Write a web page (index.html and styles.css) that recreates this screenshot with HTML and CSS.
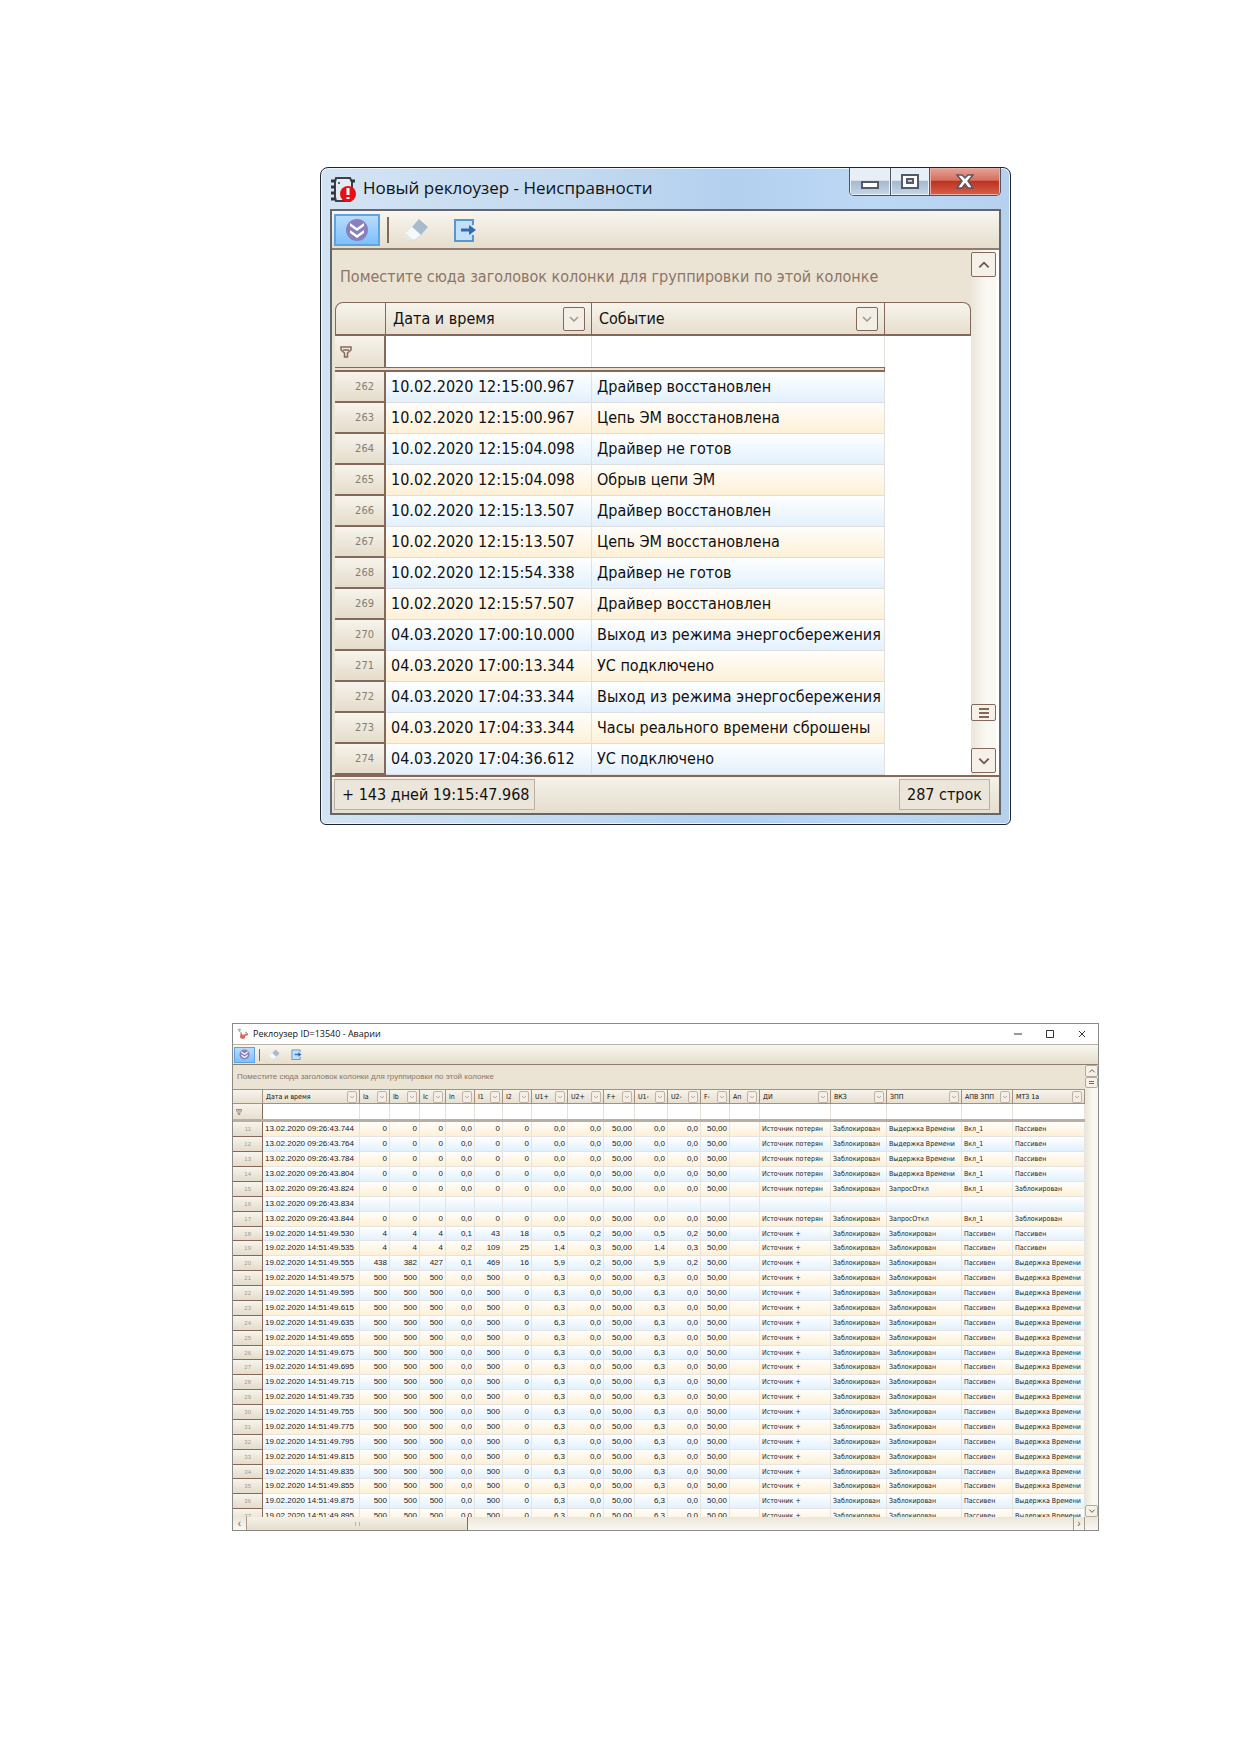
FILE: index.html
```html
<!DOCTYPE html>
<html lang="ru">
<head>
<meta charset="utf-8">
<title>Реклоузер</title>
<link rel="stylesheet" href="styles.css">
</head>
<body>
<svg class="defs" aria-hidden="true">
  <symbol id="i-expand" viewBox="0 0 24 24">
    <circle cx="12" cy="12" r="11" fill="#8a80be"/>
    <path d="M5 5l7 5 7-5v3l-7 5-7-5zM5 12l7 5 7-5v3l-7 5-7-5z" fill="#fff"/>
  </symbol>
  <symbol id="i-eraser" viewBox="0 0 24 24">
    <path d="M14 1l9 8-7 8-9-8z" fill="#a9bace"/>
    <path d="M7 9l9 8-6 5h-4l-6-6z" fill="#f5f9fc"/>
    <path d="M1 16l6 6h3l6-5" fill="none" stroke="#d2dae2"/>
  </symbol>
  <symbol id="i-export" viewBox="0 0 24 24">
    <path d="M20 7V2H2v21h18v-6" fill="#c2e1f8" stroke="#5a96d0" stroke-width="2"/>
    <path d="M8 12h9" stroke="#3468b0" stroke-width="3"/>
    <path d="M16 7l7 5-7 5z" fill="#3468b0"/>
  </symbol>
  <symbol id="i-down" viewBox="0 0 12 12">
    <path d="M2 4l4 4 4-4" fill="none" stroke="currentColor" stroke-width="1.5"/>
  </symbol>
  <symbol id="i-up" viewBox="0 0 12 12">
    <path d="M2 8l4-4 4 4" fill="none" stroke="currentColor" stroke-width="1.5"/>
  </symbol>
  <symbol id="i-funnel" viewBox="0 0 12 12">
    <path d="M1 1h10v3L7.500 7v4h-3V7L1 4zM3 4h6" fill="none" stroke="#84695a" stroke-width="1.500"/>
  </symbol>
</svg>
<main class="page">
  <section class="faults" aria-label="Неисправности">
    <header class="faults-title">
      <svg class="app-icon" viewBox="0 0 25 25">
        <path d="M5 1h14l2 4v15l-2 4H5l-1-4V5z" fill="#e3ebf3" stroke="#3c3f49" stroke-width="2"/>
        <path d="M0 4h4M0 10h4M0 16h4M0 22h4M20 4h4" stroke="#33343c" stroke-width="3"/>
        <circle cx="8" cy="6" r="1" fill="#333"/>
        <circle cx="17" cy="17" r="8" fill="#e81018"/>
        <path d="M17 11v7M17 20v2" stroke="#fff" stroke-width="3"/>
      </svg>
      <h1>Новый реклоузер - Неисправности</h1>
      <div class="caption-buttons">
        <button class="cap min" aria-label="Свернуть"><svg width="20" height="10" viewBox="0 0 20 10"><path d="M2 2h16v6H2z" fill="#fff" stroke="#535a6b" stroke-width="2"/></svg></button>
        <button class="cap max" aria-label="Развернуть"><svg width="18" height="15" viewBox="0 0 18 15"><path d="M1 1h16v13H1zM6 5h6v4H6z" fill="#fff" fill-rule="evenodd" stroke="#535a6b" stroke-width="2"/></svg></button>
        <button class="cap close" aria-label="Закрыть"><svg width="18" height="15" viewBox="0 0 18 15"><path d="M1 1h5l3 3 3-3h5l-5 6 5 7h-5l-3-4-3 4H1l5-7z" fill="#fff" stroke="#5b5562" stroke-width="1.500"/></svg></button>
      </div>
    </header>
    <div class="faults-frame">
      <div class="toolbar">
        <button class="tool active" aria-label="Развернуть группы"><svg><use href="#i-expand"/></svg></button>
        <span class="tool-sep"></span>
        <button class="tool" aria-label="Очистить"><svg><use href="#i-eraser"/></svg></button>
        <button class="tool" aria-label="Экспорт"><svg><use href="#i-export"/></svg></button>
      </div>
      <div class="grid-area">
        <div class="grid-pane">
          <p class="group-hint">Поместите сюда заголовок колонки для группировки по этой колонке</p>
          <table class="grid">
            <colgroup><col class="c-num"><col class="c-date"><col class="c-event"><col></colgroup>
            <thead>
              <tr class="head"><th></th>
                <th><div class="th">Дата и время<button class="drop" aria-label="Фильтр: дата"><svg><use href="#i-down"/></svg></button></div></th>
                <th><div class="th">Событие<button class="drop" aria-label="Фильтр: событие"><svg><use href="#i-down"/></svg></button></div></th>
                <th></th></tr>
              <tr class="filter"><th><svg class="funnel"><use href="#i-funnel"/></svg></th><td><input aria-label="Дата и время"></td><td><input aria-label="Событие"></td><td class="rest"></td></tr>
              <tr class="split"><td colspan="3"></td><td class="rest"></td></tr>
            </thead>
            <tbody>
              <tr><th>262</th><td>10.02.2020 12:15:00.967</td><td>Драйвер восстановлен</td><td class="rest"></td></tr>
              <tr><th>263</th><td>10.02.2020 12:15:00.967</td><td>Цепь ЭМ восстановлена</td><td class="rest"></td></tr>
              <tr><th>264</th><td>10.02.2020 12:15:04.098</td><td>Драйвер не готов</td><td class="rest"></td></tr>
              <tr><th>265</th><td>10.02.2020 12:15:04.098</td><td>Обрыв цепи ЭМ</td><td class="rest"></td></tr>
              <tr><th>266</th><td>10.02.2020 12:15:13.507</td><td>Драйвер восстановлен</td><td class="rest"></td></tr>
              <tr><th>267</th><td>10.02.2020 12:15:13.507</td><td>Цепь ЭМ восстановлена</td><td class="rest"></td></tr>
              <tr><th>268</th><td>10.02.2020 12:15:54.338</td><td>Драйвер не готов</td><td class="rest"></td></tr>
              <tr><th>269</th><td>10.02.2020 12:15:57.507</td><td>Драйвер восстановлен</td><td class="rest"></td></tr>
              <tr><th>270</th><td>04.03.2020 17:00:10.000</td><td>Выход из режима энергосбережения</td><td class="rest"></td></tr>
              <tr><th>271</th><td>04.03.2020 17:00:13.344</td><td>УС подключено</td><td class="rest"></td></tr>
              <tr><th>272</th><td>04.03.2020 17:04:33.344</td><td>Выход из режима энергосбережения</td><td class="rest"></td></tr>
              <tr><th>273</th><td>04.03.2020 17:04:33.344</td><td>Часы реального времени сброшены</td><td class="rest"></td></tr>
              <tr><th>274</th><td>04.03.2020 17:04:36.612</td><td>УС подключено</td><td class="rest"></td></tr>
            </tbody>
          </table>
        </div>
        <div class="vscroll">
          <button aria-label="Вверх"><svg><use href="#i-up"/></svg></button>
          <span class="track"></span>
          <button class="thumb" aria-label="Прокрутка"><i></i><i></i><i></i></button>
          <span class="track-end"></span>
          <button aria-label="Вниз"><svg><use href="#i-down"/></svg></button>
        </div>
      </div>
      <footer class="status"><span class="elapsed">+ 143 дней 19:15:47.968</span><span>287 строк</span></footer>
    </div>
  </section>

  <section class="alarms" aria-label="Аварии">
    <header class="alarms-title">
      <svg class="app-icon" viewBox="0 0 12 12">
        <path d="M1 1l2 3M2 1l2 1M4 4v6M10 4l-2 1" stroke="#8f8f98" fill="none"/>
        <path d="M4 5l2 2 5-2v2l-3 1v2l-2 1-3-1z" fill="#df6457"/>
      </svg>
      <h2>Реклоузер ID=13540 - Аварии</h2>
      <div class="flat-buttons">
        <button aria-label="Свернуть"><svg viewBox="0 0 8 8"><path d="M0 4h8"/></svg></button>
        <button aria-label="Развернуть"><svg viewBox="0 0 8 8"><path d="M.5.5h7v7h-7z"/></svg></button>
        <button aria-label="Закрыть"><svg viewBox="0 0 8 8"><path d="M1 1l6 6M7 1l-6 6"/></svg></button>
      </div>
    </header>
    <div class="toolbar small">
      <button class="tool active" aria-label="Развернуть группы"><svg><use href="#i-expand"/></svg></button>
      <span class="tool-sep"></span>
      <button class="tool" aria-label="Очистить"><svg><use href="#i-eraser"/></svg></button>
      <button class="tool" aria-label="Экспорт"><svg><use href="#i-export"/></svg></button>
    </div>
    <div class="grid-area small">
      <div class="grid-pane">
        <p class="group-hint">Поместите сюда заголовок колонки для группировки по этой колонке</p>
        <table class="grid" id="alarms"></table>
      </div>
      <div class="vscroll">
        <button aria-label="Вверх"><svg><use href="#i-up"/></svg></button>
        <button class="thumb" aria-label="Прокрутка"><i></i><i></i></button>
        <span class="track"></span>
        <button aria-label="Вниз"><svg><use href="#i-down"/></svg></button>
      </div>
    </div>
    <div class="hscroll">
      <button aria-label="Влево">‹</button>
      <button class="hthumb" aria-label="Прокрутка"><i></i><i></i></button>
      <span class="track"></span>
      <button class="right" aria-label="Вправо">›</button>
      <span class="corner"></span>
    </div>
  </section>
</main>
<script src="alarms.js"></script>
</body>
</html>
```
FILE: styles.css
```css
* { box-sizing: border-box; }
body { margin: 0; background: #fff; color: #111; font: 16px/20px "DejaVu Sans Condensed", "DejaVu Sans", sans-serif; }
button, input { font: inherit; color: inherit; margin: 0; padding: 0; border: 0; background: none; }
h1, h2, p { margin: 0; font-weight: 400; }
.defs { display: none; }
.page { display: flex; flex-direction: column; align-items: center; gap: 198px; padding: 167px 140px 225px 232px; }

.faults { width: 100%; max-width: 691px; border: 1px solid #20262e; border-radius: 8px 8px 6px 6px; padding: 0 9px 9px;
  background: linear-gradient(90deg, #d3e4f3 0, #c4daf0 35%, #b3d0ef 60%, #bcd8f5 80%, #b5d1ee 100%);
  box-shadow: inset 0 0 0 1px #eef6fd; }
.faults-title { display: flex; align-items: flex-start; height: 41px; }
.faults-title .app-icon { width: 25px; height: 25px; margin: 9px 7px 0 1px; }
.faults-title h1 { flex: 1; padding-top: 8px; font: 17px/24px "Open Sans", "Noto Sans", sans-serif; white-space: nowrap; }
.caption-buttons { display: flex; height: 28px; border: 1px solid #4b5563; border-top: 0; border-radius: 0 0 5px 5px; overflow: hidden; }
.cap { display: grid; place-items: center; background: linear-gradient(#e8eef5 0 45%, #a6b9cf 50%, #c6d7e8); box-shadow: inset 0 0 0 1px #eaf1f8; }
.min { width: 41px; border-right: 1px solid #4b5563; padding-top: 6px; }
.max { width: 39px; border-right: 1px solid #4b5563; }
.close { width: 70px; background: linear-gradient(#e6a497 0, #d5705f 45%, #bd3320 50%, #d6614a); box-shadow: inset 0 0 0 1px #e9b0a5; }
.faults-frame { border: 2px solid #62676f; background: #fff; }

.toolbar { display: flex; align-items: center; height: 39px; padding: 0 2px; border-bottom: 2px solid #8f7d70; background: linear-gradient(#f8f6f0, #e6decd); }
.tool { display: grid; place-items: center; width: 48px; height: 32px; }
.tool svg { width: 24px; height: 24px; }
.tool.active { width: 46px; border: 2px solid #5fa4e2; background: linear-gradient(#b9dcfb, #7cc0fb); }
.tool-sep { width: 2px; height: 26px; margin: 0 4px 0 7px; background: #84695a; }

.grid-area { display: flex; padding: 0 3px; }
.faults .grid-area { background: linear-gradient(90deg, #ebe4d5 0 3px, #fff 3px); }
.grid-pane { flex: 1; min-width: 0; background: #ebe4d5; }
.group-hint { height: 52px; padding: 17px 0 0 5px; color: #8c7567; white-space: nowrap; }
.grid { width: 100%; table-layout: fixed; border-collapse: separate; border-spacing: 0; }
.grid th, .grid td { padding: 0; font-weight: 400; text-align: left; white-space: nowrap; overflow: hidden; }
.c-num { width: 51px; }
.c-date { width: 206px; }
.c-event { width: 293px; }
.head th { height: 34px; border: 1px solid #84695a; border-width: 1px 1px 2px 0; background: linear-gradient(#f7f4ec, #e7dfcf); }
.faults .head th:first-child { border-left-width: 1px; border-radius: 8px 0 0; }
.faults .head th:last-child { border-radius: 0 8px 0 0; }
.th { display: flex; align-items: center; justify-content: space-between; padding: 0 6px 0 7px; }
.drop { display: grid; place-items: center; width: 22px; height: 24px; border: 1px solid #84695a; border-radius: 2px; color: #a59587; background: #f4efe6; }
.drop svg { width: 12px; height: 12px; }
.filter th { height: 31px; border-right: 2px solid #84695a; background: linear-gradient(#f7f4ec, #e7dfcf); }
.filter td { background: #fff; border-right: 1px solid #e6e1da; }
.filter input { display: block; width: 100%; outline: 0; }
.funnel { display: block; width: 12px; height: 12px; margin-left: 5px; }
.split td { height: 5px; border: 1px solid #84695a; border-width: 1px 1px 2px 0; background: #ebe0d0; }
.grid tbody th { height: 31px; padding-right: 10px; border-right: 2px solid #84695a; border-bottom: 2px solid #84695a; background: linear-gradient(#f7f4ec, #e4dccb); color: #857d74; font-size: 11px; text-align: right; }
.grid tbody td { padding-left: 5px; border-right: 1px solid #e3e1df; border-bottom: 1px solid #dedddb; background: linear-gradient(#fff, #e2f1fd); }
.grid tbody tr:nth-child(even) td { background: linear-gradient(#fffefc, #fdf0d6); }
.grid .rest.rest.rest, .grid tbody tr:nth-child(n) .rest { border: 0; background: #fff; }

.vscroll { display: flex; flex-direction: column; width: 25px; padding: 2px 0; background: linear-gradient(90deg, #ebe5da, #faf8f3 60%); }
.vscroll button { display: grid; place-items: center; height: 25px; border: 1px solid #84695a; border-radius: 2px; background: #f5f1e9; color: #6a5548; }
.vscroll svg { width: 14px; height: 14px; }
.vscroll .track { flex: 1; }
.vscroll .thumb { height: 17px; align-content: center; gap: 2px; }
.thumb i { width: 10px; height: 2px; background: #84695a; }
.track-end { height: 27px; }
.status { display: flex; justify-content: space-between; height: 38px; padding: 2px 9px 3px 2px; border-top: 2px solid #84695a; background: linear-gradient(#f5f2ea, #e6decd); }
.status span { padding: 5px 7px; border: 1px solid #bcaea1; background: #ece6da; }
.status .elapsed { padding-right: 4px; }

.alarms { width: 100%; border: 1px solid #8a8a86; font: 8px/10px "Liberation Sans", Arial, sans-serif; }
.alarms-title { display: flex; align-items: center; height: 21px; padding-left: 4px; border-bottom: 1px solid #b9b2a7; }
.alarms-title .app-icon { width: 12px; height: 12px; margin-right: 4px; }
.alarms-title h2 { flex: 1; font: 9px/12px "Open Sans", "Noto Sans", sans-serif; }
.flat-buttons { display: flex; gap: 24px; padding-right: 12px; }
.flat-buttons svg { display: block; width: 8px; height: 8px; fill: none; stroke: #333; }
.small.toolbar { height: 20px; padding: 0 1px; border-width: 1px; }
.small .tool { width: 22px; height: 16px; }
.small .tool svg { width: 11px; height: 11px; }
.small .tool.active { width: 21px; border-width: 1px; }
.small .tool-sep { width: 1px; height: 12px; margin: 0 3px 0 4px; }
.grid-area.small { height: 452px; padding: 0; }
.small .grid-pane { overflow: hidden; }
.small .group-hint { height: 24px; padding: 7px 0 0 4px; }
.small .head th { height: 15px; border-color: #a3917f; border-width: 1px 1px 1px 0; font-size: 7px; font-family: "DejaVu Sans Condensed", "DejaVu Sans", sans-serif; }
.small .th { padding: 0 2px 0 3px; }
.small .drop { width: 10px; height: 12px; border-color: #c0b3a6; }
.small .drop svg { width: 6px; height: 6px; }
.small .filter th { height: 15px; border-right-width: 1px; }
.small .filter td { height: 15px; }
.small .funnel { width: 6px; height: 6px; margin-left: 3px; }
.small .split td { height: 3px; border: 0; background: #b8aea4; }
.small.grid-area tbody th { height: 15px; padding-right: 11px; border-width: 0 1px 1px 0; color: #a39b91; font-size: 6px; line-height: 8px; }
.small.grid-area tbody td { padding: 0 0 0 2px; color: #222; border-color: #e6e4e0; background: linear-gradient(#fffefc, #fdf0d6); }
.small.grid-area tbody tr:nth-child(even) td { background: linear-gradient(#fff, #e2f1fd); }
.small.grid-area tbody tr:nth-child(8n) th { height: 14px; }
.small.grid-area tbody td.num { padding-right: 2px; text-align: right; }
.small.grid-area tbody td.state { font-size: 7px; font-family: "DejaVu Sans Condensed", "DejaVu Sans", sans-serif; }
.small .vscroll { width: 13px; padding: 0; }
.small .vscroll button { height: 12px; border-color: #b9a99c; }
.small .vscroll .thumb { height: 11px; gap: 1px; }
.small .vscroll svg { width: 8px; height: 8px; }
.small .thumb i { width: 5px; height: 1px; }
.hscroll { display: flex; height: 13px; background: linear-gradient(#ece6da, #faf8f3); }
.hscroll button { width: 14px; border-right: 1px solid #a89a8e; color: #6a5548; font-size: 10px; }
.hscroll .right { width: 12px; border-left: 1px solid #a89a8e; }
.hscroll .hthumb { display: flex; justify-content: center; align-items: center; gap: 3px; width: 221px; border-color: #84695a; background: linear-gradient(#f5f1e9, #e6decd); }
.hthumb i { width: 1px; height: 4px; background: #c0b3a6; }
.hscroll .track { flex: 1; }
.corner { width: 13px; }
```
FILE: alarms.js
```javascript
const columns = [
  ["", 30], ["Дата и время", 97], ["Ia", 30], ["Ib", 30], ["Ic", 26], ["In", 29], ["I1", 28], ["I2", 29],
  ["U1+", 36], ["U2+", 36], ["F+", 31], ["U1-", 33], ["U2-", 33], ["F-", 29], ["Ап", 30],
  ["ДИ", 71], ["ВКЗ", 56], ["ЗПП", 75], ["АПВ ЗПП", 51], ["МТЗ 1a", 0],
];

const zero = ["0", "0", "0", "0,0", "0", "0", "0,0", "0,0", "50,00", "0,0", "0,0", "50,00", ""];
const full = ["500", "500", "500", "0,0", "500", "0", "6,3", "0,0", "50,00", "6,3", "0,0", "50,00", ""];
const lost = "Источник потерян", plus = "Источник +", blocked = "Заблокирован";
const passive = "Пассивен", delay = "Выдержка Времени";

const day1 = "13.02.2020 09:26:43.", day2 = "19.02.2020 14:51:49.";
const rows = [];
for (const ms of [744, 764, 784, 804]) rows.push([day1 + ms, ...zero, lost, blocked, delay, "Вкл_1", passive]);
rows.push([day1 + 824, ...zero, lost, blocked, "ЗапросОткл", "Вкл_1", blocked]);
rows.push([day1 + 834, ...Array(18).fill("")]);
rows.push([day1 + 844, ...zero, lost, blocked, "ЗапросОткл", "Вкл_1", blocked]);
rows.push([day2 + 530, "4", "4", "4", "0,1", "43", "18", "0,5", "0,2", "50,00", "0,5", "0,2", "50,00", "", plus, blocked, blocked, passive, passive]);
rows.push([day2 + 535, "4", "4", "4", "0,2", "109", "25", "1,4", "0,3", "50,00", "1,4", "0,3", "50,00", "", plus, blocked, blocked, passive, passive]);
rows.push([day2 + 555, "438", "382", "427", "0,1", "469", "16", "5,9", "0,2", "50,00", "5,9", "0,2", "50,00", "", plus, blocked, blocked, passive, delay]);
for (let ms = 575; ms <= 895; ms += 20) rows.push([day2 + ms, ...full, plus, blocked, blocked, passive, delay]);

const kind = (c) => (c === 0 ? "date" : c < 14 ? "num" : "state");
const drop = (name) => `<button class="drop" aria-label="Фильтр: ${name}"><svg><use href="#i-down"/></svg></button>`;
const cols = columns.map(([, w]) => (w ? `<col style="width:${w}px">` : "<col>")).join("");
const head = columns.map(([n]) => (n ? `<th><div class="th">${n}${drop(n)}</div></th>` : "<th></th>")).join("");
const filter = columns.map(([n]) => (n ? `<td><input aria-label="${n}"></td>` : '<th><svg class="funnel"><use href="#i-funnel"/></svg></th>')).join("");
const body = rows.map((r, i) =>
  `<tr><th>${i + 11}</th>${r.map((v, c) => `<td class="${kind(c)}">${v}</td>`).join("")}</tr>`).join("");

document.getElementById("alarms").innerHTML =
  `<colgroup>${cols}</colgroup><thead><tr class="head">${head}</tr><tr class="filter">${filter}</tr>` +
  `<tr class="split"><td colspan="${columns.length}"></td></tr></thead><tbody>${body}</tbody>`;
```
